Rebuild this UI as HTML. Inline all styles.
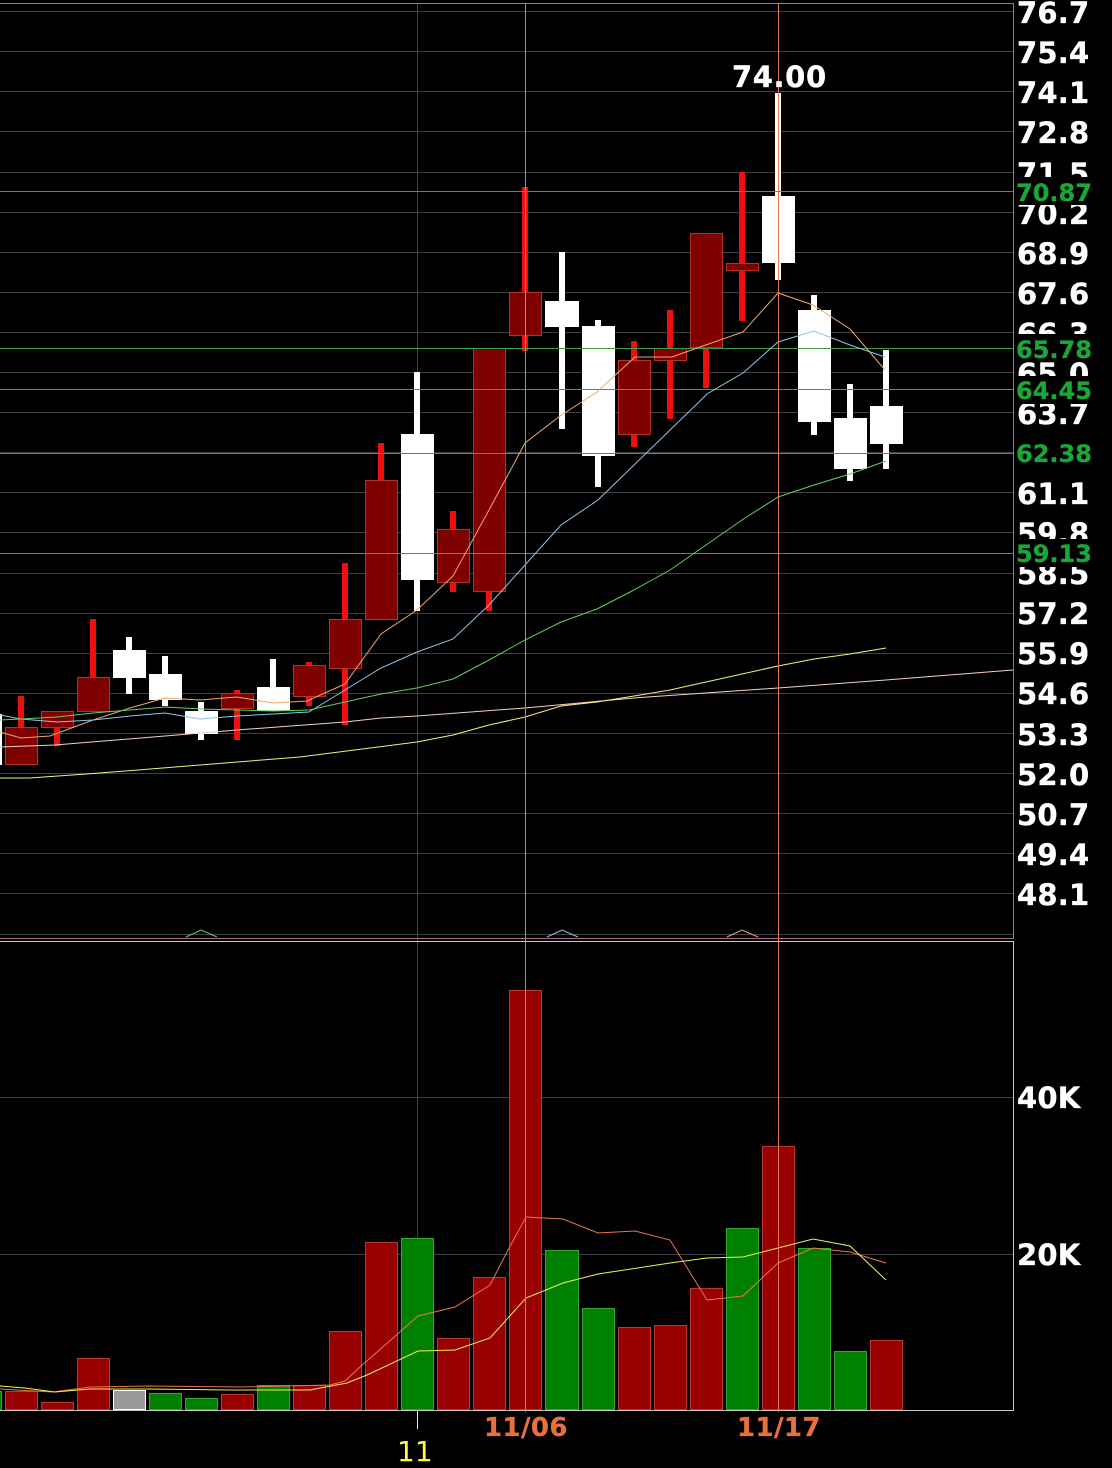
<!DOCTYPE html>
<html><head><meta charset="utf-8"><style>
html,body{margin:0;padding:0;background:#000;width:1112px;height:1468px;overflow:hidden}
svg{display:block}
.t{font-family:"DejaVu Sans","Liberation Sans",sans-serif;font-weight:bold;font-size:29px;fill:#fff;stroke:#fff;stroke-width:.35px;letter-spacing:.2px}
.g{font-family:"DejaVu Sans","Liberation Sans",sans-serif;font-weight:bold;font-size:24px;fill:#18a838;stroke:#18a838;stroke-width:.3px}
.d{font-family:"DejaVu Sans","Liberation Sans",sans-serif;font-weight:bold;font-size:26px;fill:#e8703a;stroke:#e8703a;stroke-width:.3px;letter-spacing:.4px}
.w{fill:#fff}.rw{fill:#f00f0f}
.r{fill:#800000;stroke:#b03525;stroke-width:1}
.vr{fill:#990000;stroke:#b83a30;stroke-width:1}
.vg{fill:#008000;stroke:#35a535;stroke-width:1}
.ma{fill:none;stroke-width:1}
.gr{fill:#404040}.lv{fill:#3f9f3f}.cu{fill:#e07a58}.pk{fill:#a86f8a}.wh{fill:#c8c8c8}
</style></head><body>
<svg width="1112" height="1468" viewBox="0 0 1112 1468" xmlns="http://www.w3.org/2000/svg">
<rect width="1112" height="1468" fill="#000"/>
<g shape-rendering="crispEdges">
<g class="gr">
<rect x="0" y="11" width="1013" height="1"/><rect x="0" y="51" width="1013" height="1"/><rect x="0" y="91" width="1013" height="1"/><rect x="0" y="131" width="1013" height="1"/><rect x="0" y="172" width="1013" height="1"/><rect x="0" y="212" width="1013" height="1"/><rect x="0" y="252" width="1013" height="1"/><rect x="0" y="292" width="1013" height="1"/><rect x="0" y="332" width="1013" height="1"/><rect x="0" y="372" width="1013" height="1"/><rect x="0" y="412" width="1013" height="1"/><rect x="0" y="452" width="1013" height="1"/><rect x="0" y="492" width="1013" height="1"/><rect x="0" y="532" width="1013" height="1"/><rect x="0" y="573" width="1013" height="1"/><rect x="0" y="613" width="1013" height="1"/><rect x="0" y="653" width="1013" height="1"/><rect x="0" y="693" width="1013" height="1"/><rect x="0" y="733" width="1013" height="1"/><rect x="0" y="773" width="1013" height="1"/><rect x="0" y="813" width="1013" height="1"/><rect x="0" y="853" width="1013" height="1"/><rect x="0" y="893" width="1013" height="1"/><rect x="0" y="934" width="1013" height="1"/><rect x="0" y="1097" width="1013" height="1"/><rect x="0" y="1254" width="1013" height="1"/>
<rect x="417" y="3" width="1" height="1407"/>
</g>
<!-- candles -->
<rect class="w" x="0" y="714" width="2" height="51"/>
<rect class="rw" x="18" y="696" width="6" height="31"/><rect class="r" x="5.5" y="727.5" width="32" height="37"/>
<rect class="rw" x="54" y="728" width="6" height="18"/><rect class="r" x="41.5" y="711.5" width="32" height="16"/>
<rect class="rw" x="90" y="619" width="6" height="58"/><rect class="r" x="77.5" y="677.5" width="32" height="34"/>
<rect class="w" x="126" y="637" width="6" height="57"/><rect class="w" x="113" y="650" width="33" height="28"/>
<rect class="w" x="162" y="656" width="6" height="50"/><rect class="w" x="149" y="674" width="33" height="26"/>
<rect class="w" x="198" y="702" width="6" height="38"/><rect class="w" x="185" y="711" width="33" height="23"/>
<rect class="rw" x="234" y="690" width="6" height="50"/><rect class="r" x="221.5" y="693.5" width="32" height="15"/>
<rect class="w" x="270" y="659" width="6" height="52"/><rect class="w" x="257" y="687" width="33" height="24"/>
<rect class="rw" x="306" y="662" width="6" height="44"/><rect class="r" x="293.5" y="665.5" width="32" height="31"/>
<rect class="rw" x="342" y="563" width="6" height="162"/><rect class="r" x="329.5" y="619.5" width="32" height="49"/>
<rect class="rw" x="378" y="443" width="6" height="37"/><rect class="r" x="365.5" y="480.5" width="32" height="139"/>
<rect class="w" x="414" y="372" width="6" height="239"/><rect class="w" x="401" y="434" width="33" height="146"/>
<rect class="rw" x="450" y="511" width="6" height="81"/><rect class="r" x="437.5" y="529.5" width="32" height="53"/>
<rect class="rw" x="486" y="590" width="6" height="21"/><rect class="r" x="473.5" y="348.5" width="32" height="243"/>
<rect class="rw" x="522" y="187" width="6" height="164"/><rect class="r" x="509.5" y="292.5" width="32" height="43"/>
<rect class="w" x="559" y="252" width="6" height="177"/><rect class="w" x="545" y="301" width="34" height="26"/>
<rect class="w" x="595" y="320" width="6" height="167"/><rect class="w" x="582" y="326" width="33" height="130"/>
<rect class="rw" x="631" y="341" width="6" height="106"/><rect class="r" x="618.5" y="360.5" width="32" height="74"/>
<rect class="rw" x="667" y="310" width="6" height="109"/><rect class="r" x="654.5" y="348.5" width="32" height="12"/>
<rect class="rw" x="703" y="348" width="6" height="40"/><rect class="r" x="690.5" y="233.5" width="32" height="114"/>
<rect class="rw" x="739" y="172" width="6" height="149"/><rect class="r" x="726.5" y="263.5" width="32" height="7"/>
<rect class="w" x="775" y="93" width="6" height="187"/><rect class="w" x="762" y="196" width="33" height="67"/>
<rect class="w" x="811" y="295" width="6" height="140"/><rect class="w" x="798" y="310" width="33" height="112"/>
<rect class="w" x="847" y="384" width="6" height="97"/><rect class="w" x="834" y="418" width="33" height="51"/>
<rect class="w" x="883" y="350" width="6" height="119"/><rect class="w" x="870" y="406" width="33" height="38"/>
<!-- green levels -->
<g class="lv"><rect x="0" y="191" width="1013" height="1"/><rect x="0" y="348" width="1013" height="1"/><rect x="0" y="389" width="1013" height="1"/><rect x="0" y="453" width="1013" height="1"/><rect x="0" y="553" width="1013" height="1"/></g>
<!-- volume -->
<rect class="vg" x="-3.5" y="1391.5" width="5" height="18"/>
<rect class="vr" x="5.5" y="1391.5" width="32" height="18"/>
<rect class="vr" x="41.5" y="1402.5" width="32" height="7"/>
<rect class="vr" x="77.5" y="1358.5" width="32" height="51"/>
<rect x="113.5" y="1390.5" width="32" height="19" fill="#9a9a9a" stroke="#fff"/>
<rect class="vg" x="149.5" y="1393.5" width="32" height="16"/>
<rect class="vg" x="185.5" y="1398.5" width="32" height="11"/>
<rect class="vr" x="221.5" y="1394.5" width="32" height="15"/>
<rect class="vg" x="257.5" y="1385.5" width="32" height="24"/>
<rect class="vr" x="293.5" y="1385.5" width="32" height="24"/>
<rect class="vr" x="329.5" y="1331.5" width="32" height="78"/>
<rect class="vr" x="365.5" y="1242.5" width="32" height="167"/>
<rect class="vg" x="401.5" y="1238.5" width="32" height="171"/>
<rect class="vr" x="437.5" y="1338.5" width="32" height="71"/>
<rect class="vr" x="473.5" y="1277.5" width="32" height="132"/>
<rect class="vr" x="509.5" y="990.5" width="32" height="419"/>
<rect class="vg" x="545.5" y="1250.5" width="33" height="159"/>
<rect class="vg" x="582.5" y="1308.5" width="32" height="101"/>
<rect class="vr" x="618.5" y="1327.5" width="32" height="82"/>
<rect class="vr" x="654.5" y="1325.5" width="32" height="84"/>
<rect class="vr" x="690.5" y="1288.5" width="32" height="121"/>
<rect class="vg" x="726.5" y="1228.5" width="32" height="181"/>
<rect class="vr" x="762.5" y="1146.5" width="32" height="263"/>
<rect class="vg" x="798.5" y="1248.5" width="32" height="161"/>
<rect class="vg" x="834.5" y="1351.5" width="32" height="58"/>
<rect class="vr" x="870.5" y="1340.5" width="32" height="69"/>
<!-- frames -->
<g class="pk"><rect x="0" y="3" width="1014" height="1"/><rect x="1013" y="3" width="1" height="936"/><rect x="0" y="938" width="1014" height="1"/></g>
<g class="wh"><rect x="0" y="941" width="1014" height="1"/><rect x="1013" y="941" width="1" height="470"/><rect x="0" y="1410" width="1014" height="1"/></g>
<rect x="417" y="1411" width="1" height="18" fill="#ffff33"/>
</g>
<!-- price MAs -->
<polyline class="ma" stroke="#f0a868" points="0,732 21,738 50,736 93,720 130,708 165,698 200,700 237,697 273,703 307,701 345,684 381,634 417,610 453,576 489,510 525,443 560,416 597,392 635,357 672,357 700,347 743,332 778,293 813,305 850,329 885,370"/>
<polyline class="ma" stroke="#8ec4e8" points="0,715 21,719 57,722 93,720 130,716 165,713 200,719 237,716 273,714 309,712 345,690 381,668 417,652 453,639 489,605 525,565 561,525 598,500 634,465 670,430 700,401 707,394 743,373 778,342 814,331 850,345 885,357"/>
<polyline class="ma" stroke="#5fd05f" points="0,720 21,719 57,717 93,713 130,710 165,707 201,709 237,710 273,711 309,710 345,702 381,694 417,688 453,679 489,660 525,640 561,622 597,609 634,590 670,570 706,545 742,520 778,497 814,485 850,474 886,461"/>
<polyline class="ma" stroke="#f5d0c0" points="0,747 55,745 165,736 237,730 345,722 381,718 417,716 525,708 634,698 778,688 886,680 1013,670"/>
<polyline class="ma" stroke="#f5f07a" points="0,778 30,778 100,773 200,765 300,757 370,748 417,742 453,735 489,725 525,717 561,706 597,702 634,696 670,690 706,682 742,674 778,666 814,659 850,654 886,648"/>
<polyline class="ma" stroke="#5fd05f" points="186,937 201,930 217,937"/>
<polyline class="ma" stroke="#8ec4e8" points="547,937 562,930 578,937"/>
<polyline class="ma" stroke="#f0a868" points="727,937 742,930 758,937"/>
<!-- volume MAs -->
<polyline class="ma" stroke="#e87848" points="0,1389 35,1391 53,1392 90,1387 150,1386 240,1387 330,1385 345,1381 360,1367 418,1316 455,1307 490,1285 508,1250 526,1217 563,1219 598,1233 635,1231 670,1240 707,1300 743,1296 778,1263 813,1248 832,1250 850,1252 886,1263"/>
<polyline class="ma" stroke="#f5f050" points="0,1386 25,1388 55,1392 90,1389 150,1389 230,1390 310,1390 347,1383 367,1375 418,1351 455,1350 490,1338 526,1298 563,1283 598,1274 670,1263 707,1258 743,1257 778,1248 813,1239 850,1246 886,1280"/>
<!-- cursor lines -->
<g shape-rendering="crispEdges" class="cu"><rect x="525" y="3" width="1" height="1409"/><rect x="778" y="3" width="1" height="1409"/></g>
<!-- axis labels -->
<g class="t">
<text x="1017" y="23">76.7</text><text x="1017" y="63">75.4</text><text x="1017" y="103">74.1</text><text x="1017" y="143">72.8</text><text x="1017" y="184">71.5</text><text x="1017" y="224">70.2</text><text x="1017" y="264">68.9</text><text x="1017" y="304">67.6</text><text x="1017" y="344">66.3</text><text x="1017" y="384">65.0</text><text x="1017" y="424">63.7</text><text x="1017" y="504">61.1</text><text x="1017" y="544">59.8</text><text x="1017" y="584">58.5</text><text x="1017" y="624">57.2</text><text x="1017" y="664">55.9</text><text x="1017" y="704">54.6</text><text x="1017" y="745">53.3</text><text x="1017" y="785">52.0</text><text x="1017" y="825">50.7</text><text x="1017" y="865">49.4</text><text x="1017" y="905">48.1</text>
<text x="1017" y="1108">40K</text><text x="1017" y="1265">20K</text>
<text x="732" y="87" style="letter-spacing:.6px">74.00</text>
</g>
<g fill="#000" shape-rendering="crispEdges"><rect x="1015" y="177" width="97" height="28"/><rect x="1015" y="334" width="97" height="28"/><rect x="1015" y="376" width="97" height="28"/><rect x="1015" y="439" width="97" height="28"/><rect x="1015" y="539" width="97" height="28"/></g>
<g class="g"><text x="1016" y="201">70.87</text><text x="1016" y="358">65.78</text><text x="1016" y="399">64.45</text><text x="1016" y="462">62.38</text><text x="1016" y="562">59.13</text></g>
<text class="d" x="484" y="1436">11/06</text><text class="d" x="737" y="1436">11/17</text>
<text x="397" y="1461" font-family="'DejaVu Sans','Liberation Sans',sans-serif" font-size="28" fill="#ffff33">11</text>
</svg>
</body></html>
